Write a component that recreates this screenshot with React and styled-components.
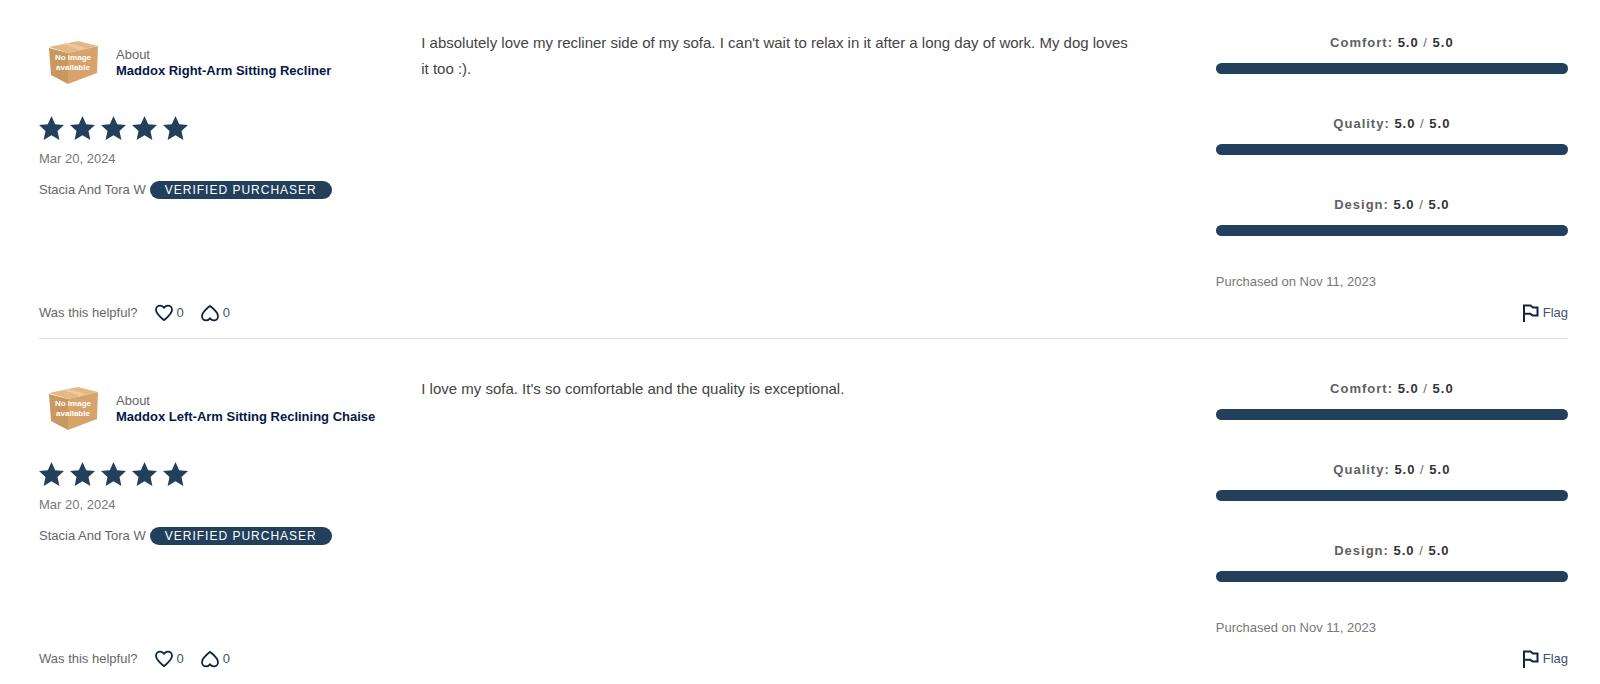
import React from "react";
import styled, { createGlobalStyle } from "styled-components";

const navy = "#22405c";
const ink = "#0b2545";

const GlobalStyle = createGlobalStyle`
  *, *::before, *::after { box-sizing: border-box; }
  body {
    margin: 0;
    background: #fff;
    color: #666;
    font-family: "Liberation Sans", Arial, Helvetica, sans-serif;
    font-size: 13px;
    line-height: 16px;
  }
`;

const ReviewList = styled.main`
  padding: 0 32px 0 39px;
`;

const Review = styled.article`
  padding: 30px 0 15px;

  & + & {
    padding-top: 37px;
    border-top: 1px solid #dadde0;
  }
`;

const Columns = styled.div`
  display: grid;
  grid-template-columns: minmax(0, 1fr) minmax(0, 2fr) minmax(0, 1fr);
`;

const Summary = styled.div`
  padding-top: 10px;
`;

const Product = styled.div`
  display: flex;
  align-items: center;
  padding-left: 9px;
  gap: 17px;
`;

const BoxPicture = styled.svg`
  flex: none;
  display: block;
  font-size: 8px;
  font-weight: bold;
`;

const ProductText = styled.div`
  display: flex;
  flex-direction: column;
`;

const ProductLink = styled.a`
  color: #05184a;
  font-weight: bold;
  text-decoration: none;
`;

const Stars = styled.div`
  display: flex;
  gap: 6px;
  margin-top: 30px;
`;

const StarIcon = styled.svg`
  display: block;
  fill: ${navy};
`;

const ReviewDate = styled.time`
  display: block;
  margin-top: 11px;
  color: #777;
`;

const Author = styled.div`
  display: flex;
  align-items: center;
  gap: 4px;
  margin-top: 14px;
  line-height: 18px;
`;

const VerifiedBadge = styled.span`
  padding: 0 15px;
  border-radius: 9px;
  background: ${navy};
  color: #fff;
  font-size: 12px;
  letter-spacing: 1px;
  text-transform: uppercase;
`;

const Body = styled.p`
  margin: 0;
  padding-right: 54px;
  color: #444;
  font-size: 15px;
  line-height: 26px;
`;

const Details = styled.div`
  padding: 4px 0 0 30px;
`;

const Rating = styled.div`
  margin-bottom: 41px;
  text-align: center;
  line-height: 18px;
  letter-spacing: 1px;

  &:last-of-type {
    margin-bottom: 38px;
  }
`;

const RatingName = styled.b`
  color: #606060;
`;

const RatingValue = styled.b`
  color: #333;
`;

const Track = styled.div`
  height: 11px;
  margin-top: 11px;
  border-radius: 6px;
  background: #e4e7ea;
`;

const Fill = styled.div`
  height: 100%;
  border-radius: 6px;
  background: ${navy};
`;

const Purchased = styled.p`
  margin: 0;
  color: #777;
`;

const Footer = styled.footer`
  display: flex;
  align-items: center;
  margin-top: 13px;
`;

const ActionButton = styled.button`
  display: flex;
  align-items: center;
  gap: 4px;
  height: 20px;
  margin-left: ${(p) => (p.$end ? "auto" : "17px")};
  padding: 0;
  border: 0;
  background: none;
  color: #3c536c;
  font: inherit;
  cursor: pointer;
`;

const LineIcon = styled.svg`
  display: block;
  fill: none;
  stroke: ${ink};
  stroke-width: ${(p) => (p.$sharp ? 2 : 1.8)};
  stroke-linejoin: ${(p) => (p.$sharp ? "miter" : "round")};
`;

const NoImageBox = () => (
  <BoxPicture width="51" height="46" viewBox="0 0 51 46" role="img" aria-label="No image available">
    <path d="M1 8 20 13 20 44 3 35Z" fill="#c8985f" />
    <path d="M20 13 50 6 49 33 20 44Z" fill="#d8a36b" />
    <path d="M1 7 30 1 50 6 20 13Z" fill="#e3b786" />
    <path d="M15 4 20 3 38 8 32 10Z" fill="#ecc9a4" />
    <text x="25" y="20" textAnchor="middle" fill="#fff">No image</text>
    <text x="25" y="30" textAnchor="middle" fill="#fff">available</text>
  </BoxPicture>
);

const Star = () => (
  <StarIcon width="25" height="24" viewBox="0 0 25 24" aria-hidden="true">
    <path d="M12.500 0 16.200 8.200 25 9.100 18.500 15 20.400 24 12.500 19.300 4.600 24 6.500 15 0 9.100 8.800 8.200Z" />
  </StarIcon>
);

const heartPath = "M9 16.200C7 14.300 1 10.200 1 5.800C1 3.200 2.900 1.600 5.100 1.600C6.900 1.600 8.300 2.500 9 3.900C9.700 2.500 11.100 1.600 12.900 1.600C15.100 1.600 17 3.200 17 5.800C17 10.200 11 14.300 9 16.200Z";

const Heart = ({ flipped }) => (
  <LineIcon width="18" height="18" viewBox="0 0 18 18" aria-hidden="true">
    <path d={heartPath} transform={flipped ? "rotate(180 9 9)" : undefined} />
  </LineIcon>
);

const FlagIcon = () => (
  <LineIcon $sharp width="17" height="18" viewBox="0 0 17 18" aria-hidden="true">
    <path d="M2 18V1.500H8.500L11 3.500H15.500V11.500H10.800L8.300 9.800H2" />
  </LineIcon>
);

const ratings = [
  { name: "Comfort", value: 5 },
  { name: "Quality", value: 5 },
  { name: "Design", value: 5 },
];

const reviews = [
  {
    product: "Maddox Right-Arm Sitting Recliner",
    body: "I absolutely love my recliner side of my sofa. I can't wait to relax in it after a long day of work. My dog loves it too :).",
  },
  {
    product: "Maddox Left-Arm Sitting Reclining Chaise",
    body: "I love my sofa. It's so comfortable and the quality is exceptional.",
  },
];

function ReviewItem({ product, body }) {
  return (
    <Review>
      <Columns>
        <Summary>
          <Product>
            <NoImageBox />
            <ProductText>
              <span>About</span>
              <ProductLink href="#product">{product}</ProductLink>
            </ProductText>
          </Product>
          <Stars role="img" aria-label="5 out of 5 stars">
            {[1, 2, 3, 4, 5].map((n) => <Star key={n} />)}
          </Stars>
          <ReviewDate dateTime="2024-03-20">Mar 20, 2024</ReviewDate>
          <Author>
            <span>Stacia And Tora W</span>
            <VerifiedBadge>Verified Purchaser</VerifiedBadge>
          </Author>
        </Summary>
        <Body>{body}</Body>
        <Details>
          {ratings.map((r) => (
            <Rating key={r.name}>
              <RatingName>{r.name}:</RatingName>{" "}
              <RatingValue>{r.value.toFixed(1)}</RatingValue> / <RatingValue>5.0</RatingValue>
              <Track>
                <Fill style={{ width: `${(r.value / 5) * 100}%` }} />
              </Track>
            </Rating>
          ))}
          <Purchased>Purchased on Nov 11, 2023</Purchased>
        </Details>
      </Columns>
      <Footer>
        <span>Was this helpful?</span>
        <ActionButton type="button" aria-label="Helpful, 0 votes"><Heart />0</ActionButton>
        <ActionButton type="button" aria-label="Not helpful, 0 votes"><Heart flipped />0</ActionButton>
        <ActionButton type="button" $end><FlagIcon />Flag</ActionButton>
      </Footer>
    </Review>
  );
}

export default function App() {
  return (
    <>
      <GlobalStyle />
      <ReviewList>
        {reviews.map((r) => <ReviewItem key={r.product} {...r} />)}
      </ReviewList>
    </>
  );
}
